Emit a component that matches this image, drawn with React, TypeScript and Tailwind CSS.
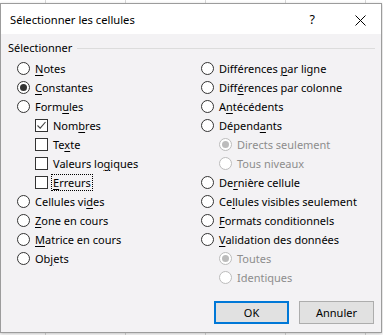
import React from "react";

function Lbl({ t, disabled }: { t: string; disabled?: boolean }) {
  const i = t.indexOf("&");
  const cls = disabled ? "text-[#8d8d8d]" : "text-black";
  if (i < 0) return <span className={cls}>{t}</span>;
  return (
    <span className={cls}>
      {t.slice(0, i)}
      <span className="underline underline-offset-[2px] decoration-1">{t[i + 1]}</span>
      {t.slice(i + 2)}
    </span>
  );
}

function Radio({ t, checked, disabled, indent }: { t: string; checked?: boolean; disabled?: boolean; indent?: boolean }) {
  return (
    <div className={"flex h-[19px] items-center " + (indent ? "pl-[18px]" : "")}>
      <span
        className={
          "flex h-[13px] w-[13px] shrink-0 items-center justify-center rounded-full border bg-white " +
          (disabled ? "border-[#bcbcbc]" : "border-[#333333]")
        }
      >
        {checked && (
          <span className={"h-[7px] w-[7px] rounded-full " + (disabled ? "bg-[#bcbcbc]" : "bg-[#333333]")} />
        )}
      </span>
      <span className="ml-[5px] whitespace-nowrap">
        <Lbl t={t} disabled={disabled} />
      </span>
    </div>
  );
}

function Check({ t, checked, focus }: { t: string; checked?: boolean; focus?: boolean }) {
  return (
    <div className="flex h-[19px] items-center pl-[18px]">
      <span className="flex h-[13px] w-[13px] shrink-0 items-center justify-center border border-[#333333] bg-white">
        {checked && (
          <svg width="11" height="11" viewBox="0 0 11 11">
            <path d="M1.5 5.5 L4.2 8.2 L9.5 2" fill="none" stroke="#444" strokeWidth="1.1" />
          </svg>
        )}
      </span>
      <span
        className={
          "ml-[3px] whitespace-nowrap px-[1px] leading-[15px] " +
          (focus ? "border border-dotted border-black" : "border border-transparent")
        }
      >
        <Lbl t={t} />
      </span>
    </div>
  );
}

export default function App() {
  const lines = [45, 125, 205, 285, 365];
  return (
    <div className="relative h-[335px] w-[383px] overflow-hidden bg-white font-['Noto_Sans',sans-serif] text-[11px] leading-[16px]">
      {lines.map((x) => (
        <div key={x} className="absolute top-0 h-full w-px bg-[#d8d8d8]" style={{ left: x }} />
      ))}
      <div className="relative mt-[3px] flex h-[330px] w-[382px] flex-col border border-[#9c9c9c] bg-[#f3f2f4] shadow-[0_1px_3px_rgba(0,0,0,0.25)]">
        <div className="flex h-[30px] shrink-0 items-center bg-white pl-[9px] pt-[2px]">
          <span className="text-[11.2px]">Sélectionner les cellules</span>
          <span className="ml-auto mr-[40px] text-[12.5px]">?</span>
          <svg width="11" height="11" viewBox="0 0 11 11" className="mr-[15px]">
            <path d="M0.5 0.5 L10.5 10.5 M10.5 0.5 L0.5 10.5" stroke="#000" strokeWidth="1" />
          </svg>
        </div>
        <div className="mt-[6px] flex h-[16px] items-center pl-[7px] pr-[6px]">
          <span>Sélectionner</span>
          <div className="ml-[5px] h-px flex-1 bg-[#dcdcdc]" />
        </div>
        <div className="mt-[3px] flex">
          <div className="w-[200px] pl-[16px]">
            <Radio t="&Notes" />
            <Radio t="&Constantes" checked />
            <Radio t="Form&ules" />
            <Check t="Nom&bres" checked />
            <Check t="Te&xte" />
            <Check t="Valeurs lo&giques" />
            <Check t="&Erreurs" focus />
            <Radio t="Cellules vi&des" />
            <Radio t="&Zone en cours" />
            <Radio t="&Matrice en cours" />
            <Radio t="Ob&jets" />
          </div>
          <div className="flex-1">
            <Radio t="Différences &par ligne" />
            <Radio t="Diff&érences par colonne" />
            <Radio t="A&ntécédents" />
            <Radio t="Dépend&ants" />
            <Radio t="Directs seulement" checked disabled indent />
            <Radio t="Tous niveaux" disabled indent />
            <Radio t="De&rnière cellule" />
            <Radio t="Ce&llules visibles seulement" />
            <Radio t="&Formats conditionnels" />
            <Radio t="&Validation des données" />
            <Radio t="Toutes" checked disabled indent />
            <Radio t="Identiques" disabled indent />
          </div>
        </div>
        <div className="mt-[14px] flex justify-end gap-[10px] pr-[7px]">
          <button className="flex h-[23px] w-[75px] items-center justify-center border-2 border-[#0078d7] bg-[#e1e1e1] text-[11px]">
            OK
          </button>
          <button className="flex h-[23px] w-[75px] items-center justify-center border border-[#adadad] bg-[#e1e1e1] text-[11px]">
            Annuler
          </button>
        </div>
      </div>
    </div>
  );
}
